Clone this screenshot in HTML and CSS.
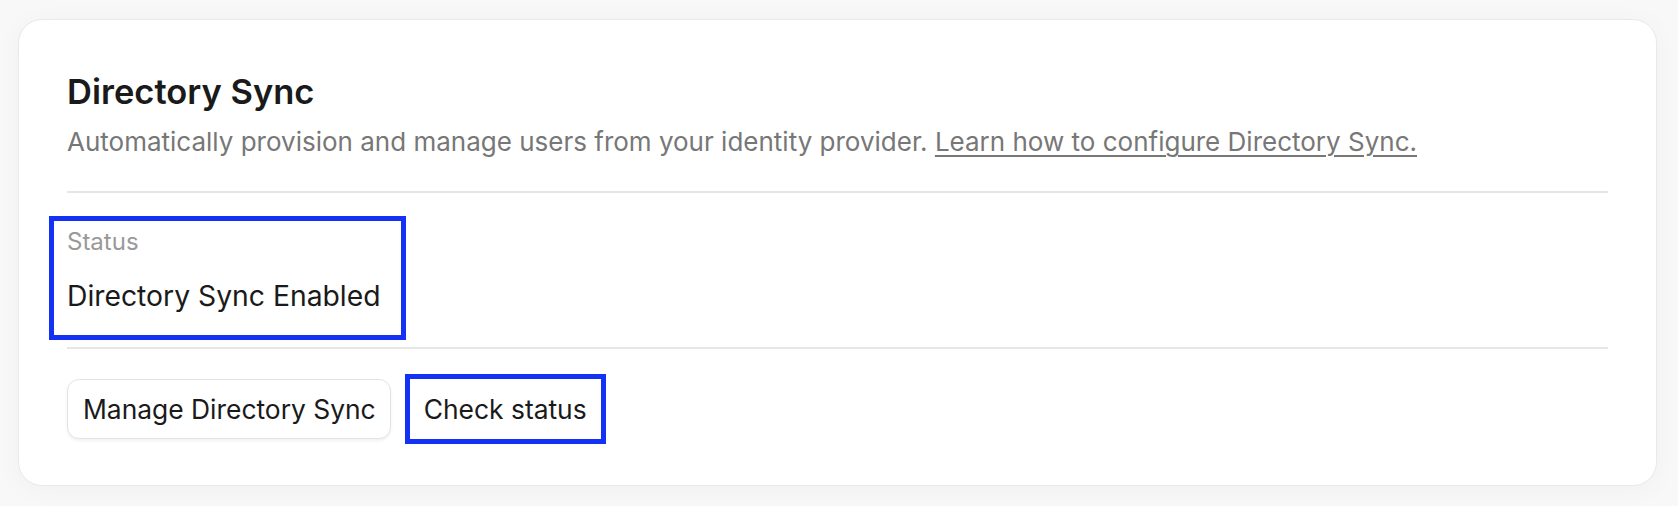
FILE: index.html
```html
<!DOCTYPE html>
<html lang="en">
<head>
<meta charset="utf-8">
<title>Directory Sync</title>
<link rel="stylesheet" href="styles.css">
</head>
<body>
<section class="card">
  <h1 class="title">Directory Sync</h1>
  <p class="desc">Automatically provision and manage users from your identity provider. <a class="desc-link" href="#">Learn how to configure Directory Sync.</a></p>
  <hr class="divider">
  <div class="status highlight">
    <div class="status-label">Status</div>
    <div class="status-value">Directory Sync Enabled</div>
  </div>
  <hr class="divider divider-second">
  <div class="actions">
    <button class="btn btn-outline" type="button">Manage Directory Sync</button>
    <button class="btn btn-plain" type="button">Check status</button>
  </div>
</section>
</body>
</html>
```

FILE: styles.css
```css
* { box-sizing: border-box; }

html, body {
  margin: 0;
  padding: 0;
  background: #f8f8f8;
  font-family: Inter, "Noto Sans", "Liberation Sans", sans-serif;
  color: #1a1a1a;
}

body {
  padding: 19px 21px 21px 18px;
}

.card {
  background: #ffffff;
  border: 1.5px solid #e9e9e9;
  border-radius: 24px;
  padding: 48px 48px 46px 48px;
  box-shadow: 0 4px 28px rgba(0, 0, 0, 0.035);
  display: flex;
  flex-direction: column;
  align-items: flex-start;
}

.title {
  margin: 0;
  font-size: 34.5px;
  line-height: 48px;
  font-weight: 600;
  color: #1a1a1a;
}

.desc {
  margin: 10px 0 0;
  font-size: 26px;
  line-height: 32px;
  font-weight: 400;
  color: #777777;
}

.desc-link {
  color: #777777;
  text-decoration: underline;
  text-decoration-thickness: 1.5px;
  text-underline-offset: 4px;
}

.divider {
  align-self: stretch;
  margin: 33px 0 0;
  border: 0;
  height: 2px;
  background: #e6e6e6;
}

.divider-second {
  margin-top: 7px;
}

.status {
  margin: 23px 0 0 -18px;
  padding: 5px 20px 21px 13px;
  display: flex;
  flex-direction: column;
}

.highlight {
  border: 5px solid #1432f5;
}

.status-label {
  font-size: 24px;
  line-height: 32px;
  color: #999999;
}

.status-value {
  margin-top: 20px;
  font-size: 28.3px;
  line-height: 36px;
  font-weight: 400;
  color: #1a1a1a;
}

.actions {
  margin-top: 30px;
  display: flex;
  align-items: center;
  gap: 19px;
}

.btn {
  font-family: inherit;
  font-size: 26.4px;
  font-weight: 400;
  color: #1a1a1a;
  height: 60px;
  background: #ffffff;
  cursor: pointer;
  display: flex;
  align-items: center;
}

.btn-outline {
  border: 1.5px solid #e3e3e3;
  border-radius: 12px;
  padding: 0 14px 0 15px;
  box-shadow: 0 2px 3px rgba(0, 0, 0, 0.06);
}

.btn-plain {
  border: 0;
  border-radius: 0;
  padding: 0 14px;
  outline: 5px solid #1432f5;
  outline-offset: 0;
}
```
